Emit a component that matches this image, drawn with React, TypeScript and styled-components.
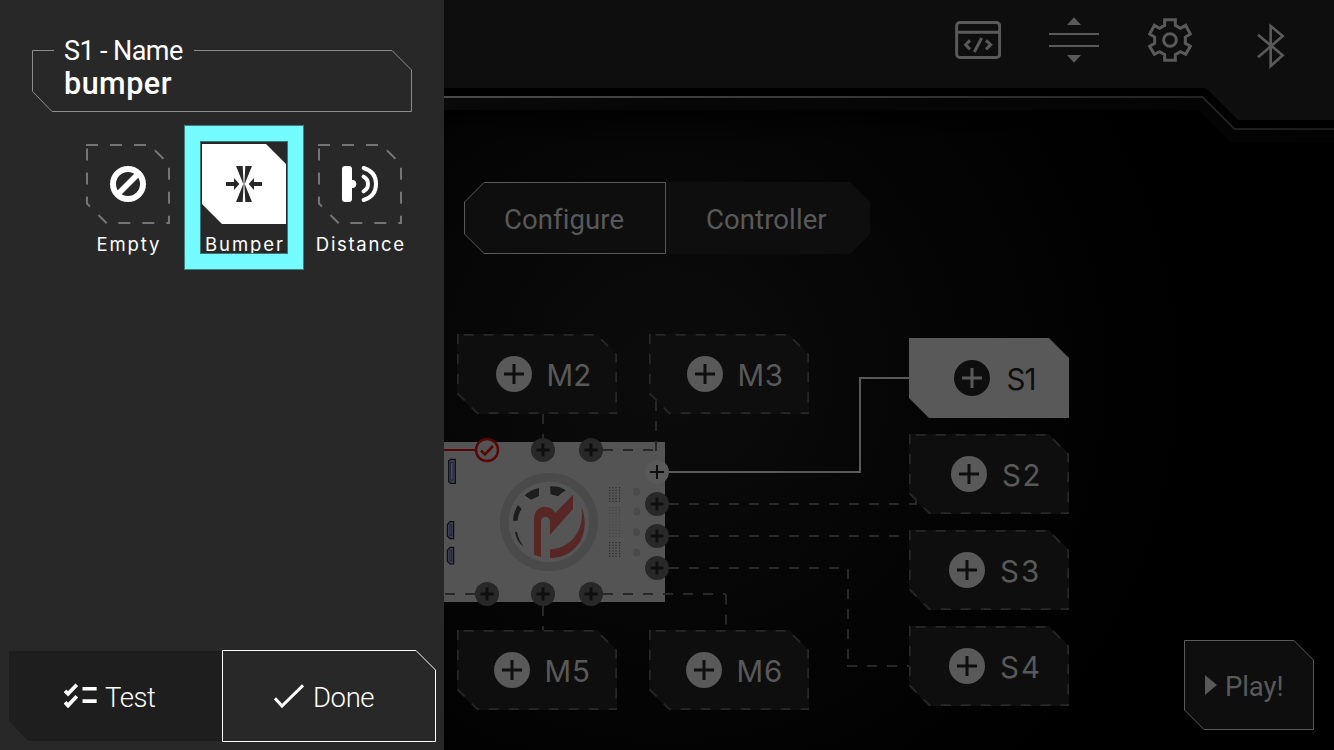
import React from "react";
import styled, { createGlobalStyle } from "styled-components";

const GlobalStyle = createGlobalStyle`
  * { box-sizing: border-box; }
  body { margin: 0; background: #000; font-family: Roboto, "Liberation Sans", sans-serif; }
  svg { display: block; flex: none; }
`;

const DIM = "#595959";
const PANEL = "#0e0e0e";
const LINE = "#282828";

const Stage = styled.div`
  position: relative;
  width: 1334px;
  height: 750px;
  overflow: hidden;
  display: flex;
  flex-direction: column;
  background: radial-gradient(circle at 667px 375px, #0c0c0c 0, #060606 230px, #000 520px);
`;

const Header = styled.header`
  position: relative;
  height: 142px;
  flex: none;
`;

const HeaderShape = styled.svg`
  position: absolute;
  inset: 0;
`;

const HeaderIcons = styled.nav`
  position: relative;
  display: flex;
  align-items: flex-start;
  justify-content: flex-end;
  padding: 17px 49px 0 0;
`;

const IconSlot = styled.span<{ $top: number; $gap: number }>`
  margin-top: ${(p) => p.$top}px;
  margin-right: ${(p) => p.$gap}px;
`;

const Tabs = styled.div`
  display: flex;
  margin: 40px 0 0 464px;
`;

const Tab = styled.div<{ $width: number; $indent: number; $spacing: number }>`
  position: relative;
  width: ${(p) => p.$width}px;
  height: 72px;
  padding-left: ${(p) => p.$indent}px;
  display: flex;
  align-items: center;
  font-size: 27.5px;
  line-height: 1;
  font-weight: 450;
  padding-top: 3px;
  letter-spacing: ${(p) => p.$spacing}px;
  color: ${DIM};
`;

const Backdrop = styled.svg`
  position: absolute;
  inset: 0;
  z-index: 0;
`;

const Label = styled.span`
  position: relative;
  white-space: nowrap;
`;

const PlayButton = styled.div`
  position: relative;
  align-self: flex-end;
  margin: auto 20px 20px 0;
  width: 130px;
  height: 90px;
  display: flex;
  align-items: center;
  gap: 8px;
  padding: 3px 0 0 21px;
  color: ${DIM};
  font-size: 27.5px;
  line-height: 1;
  letter-spacing: -0.1px;
`;

const PlayIcon = styled.svg`
  position: relative;
  top: -2px;
`;

const Diagram = styled.div`
  position: absolute;
  inset: 0;
  pointer-events: none;
`;

const Wires = styled.svg`
  position: absolute;
  inset: 0;
`;

const NodeBox = styled.div<{ $x: number; $y: number; $indent: number; $on?: boolean }>`
  position: absolute;
  left: ${(p) => p.$x}px;
  top: ${(p) => p.$y}px;
  width: 160px;
  height: 80px;
  padding-left: ${(p) => p.$indent}px;
  display: flex;
  align-items: center;
  clip-path: polygon(0 0, 140px 0, 160px 20px, 160px 80px, 20px 80px, 0 60px);
  background: ${(p) => (p.$on ? DIM : PANEL)};
  color: ${(p) => (p.$on ? PANEL : DIM)};
`;

const PlusCircle = styled.svg`
  position: relative;
`;

const NodeLabel = styled.span<{ $gap: number; $spacing: number }>`
  position: relative;
  top: 2px;
  margin-left: ${(p) => p.$gap}px;
  font-family: Inter, "Liberation Sans", sans-serif;
  font-size: 29.5px;
  line-height: 1;
  font-weight: 400;
  letter-spacing: ${(p) => p.$spacing}px;
`;

const Drawer = styled.aside`
  position: absolute;
  left: 0;
  top: 0;
  width: 444px;
  height: 750px;
  background: #282828;
  color: #fff;
  display: flex;
  flex-direction: column;
  padding: 39px 8px 8px 9px;
`;

const NameField = styled.div`
  position: relative;
  width: 380px;
  height: 73px;
  margin-left: 23px;
  padding-left: 32px;
  display: flex;
  flex-direction: column;
`;

const FieldTitle = styled.span`
  position: relative;
  font-size: 27px;
  line-height: 24px;
  letter-spacing: -0.6px;
`;

const FieldValue = styled.span`
  position: relative;
  margin-top: 6px;
  font-size: 30.5px;
  line-height: 30px;
  font-weight: 500;
  letter-spacing: 0.5px;
`;

const Picker = styled.div`
  display: flex;
  gap: 16px;
  margin: 32px 0 0 69px;
`;

const Choice = styled.div`
  position: relative;
  width: 100px;
  display: flex;
  flex-direction: column;
  align-items: center;
`;

const Tile = styled.div<{ $on?: boolean }>`
  position: relative;
  width: 84px;
  height: 80px;
  display: flex;
  align-items: center;
  justify-content: center;
  background: ${(p) => (p.$on ? "#fff" : "transparent")};
  clip-path: polygon(0 0, 64px 0, 84px 20px, 84px 80px, 20px 80px, 0 60px);
`;

const TileIcon = styled.svg`
  position: relative;
`;

const Caption = styled.span<{ $spacing: number }>`
  margin-top: 10px;
  font-family: Inter, "Liberation Sans", sans-serif;
  font-size: 18.5px;
  line-height: 21px;
  letter-spacing: ${(p) => p.$spacing}px;
  margin-right: -${(p) => p.$spacing}px;
  white-space: nowrap;
`;

const Highlight = styled.div`
  position: absolute;
  left: -9px;
  top: -18px;
  width: 118px;
  height: 143px;
  border: 15px solid #74fbfd;
  outline: 1px solid rgba(116, 251, 253, 0.4);
  box-shadow: inset 0 0 0 1px #3a7677;
`;

const Actions = styled.div`
  display: flex;
  margin-top: auto;
`;

const Action = styled.div<{ $width: number; $indent: number; $gap: number; $spacing: number }>`
  position: relative;
  width: ${(p) => p.$width}px;
  height: 92px;
  display: flex;
  align-items: center;
  gap: ${(p) => p.$gap}px;
  padding: 3px 0 0 ${(p) => p.$indent}px;
  font-size: 27.5px;
  line-height: 1;
  font-weight: 350;
  letter-spacing: ${(p) => p.$spacing}px;
`;

const ActionIcon = styled.svg`
  position: relative;
  top: -2px;
`;

type NodeProps = { x: number; y: number; indent: number; gap: number; name: string; spacing: number; on?: boolean };

const nodes: NodeProps[] = [
  { x: 457, y: 334, indent: 39, gap: 14.5, spacing: 0, name: "M2" },
  { x: 649, y: 334, indent: 38, gap: 14.5, spacing: 0.5, name: "M3" },
  { x: 457, y: 630, indent: 37, gap: 14.5, spacing: 0.8, name: "M5" },
  { x: 649, y: 630, indent: 37, gap: 14.5, spacing: 0.8, name: "M6" },
  { x: 909, y: 338, indent: 45, gap: 16.5, spacing: -1, name: "S1", on: true },
  { x: 909, y: 434, indent: 42, gap: 15, spacing: 1.5, name: "S2" },
  { x: 909, y: 530, indent: 40, gap: 15, spacing: 2, name: "S3" },
  { x: 909, y: 626, indent: 40, gap: 15, spacing: 2, name: "S4" },
];

function PortNode({ x, y, indent, gap, spacing, name, on }: NodeProps) {
  return (
    <NodeBox $x={x} $y={y} $indent={indent} $on={on}>
      {!on && (
        <Backdrop width="160" height="80">
          <path d="M0 0V60L20 80H160V20L140 0Z" fill="none" stroke={LINE} strokeWidth="3.4" strokeDasharray="10 10" />
        </Backdrop>
      )}
      <PlusCircle width="36" height="36">
        <circle cx="18" cy="18" r="18" fill={on ? PANEL : DIM} />
        <path d="M8 18H28M18 8V28" stroke={on ? DIM : PANEL} strokeWidth="3" />
      </PlusCircle>
      <NodeLabel $gap={gap} $spacing={spacing}>{name}</NodeLabel>
    </NodeBox>
  );
}

const ports = [
  [543, 450], [591, 450], [657, 504], [657, 536], [657, 568], [487, 594], [543, 594], [591, 594],
];

const dotRows = [
  ...[173, 181, 189, 198, 206, 214].map((y) => ({ y, c: "#1a1a1a" })),
  ...[233, 241, 250].map((y) => ({ y, c: "#3a3c44" })),
  ...[258, 267, 275, 284, 292].map((y) => ({ y, c: "#464646" })),
  ...[301, 310, 319].map((y) => ({ y, c: "#3a3c44" })),
  ...[338, 346, 354, 363, 371, 379].map((y) => ({ y, c: "#1a1a1a" })),
];

function Board() {
  return (
    <g>
      <rect x="440" y="442" width="225" height="160" fill="#545454" />
      <g transform="translate(444 430) scale(.33333)">
        <circle cx="315" cy="276" r="134" fill="#555" stroke="#4a4a4a" strokeWidth="26" />
        <g fill="#1d1d1d">
          <path d="M318 169L344 170L366 181Q352 188 343 199L320 193Z" />
          <path d="M242 196Q262 178 285 174V198L261 209Z" />
          <path d="M222 225L233 237Q222 252 221 272H207Q208 246 222 225Z" />
          <path d="M213 306H219Q224 330 239 350Q218 336 213 306Z" />
        </g>
        <g fill="#572625">
          <path d="M270 374V268Q271 231 304 230Q324 231 334 249L387 194V237L318 314V276Q318 261 304 260Q291 261 291 276V381Z" />
          <path d="M318 358C378 356 424 302 412 230C427 262 426 312 403 343C382 372 350 384 318 384Z" />
        </g>
        {dotRows.map((r) =>
          [497, 507, 516, 527].map((x) => <rect key={`${x}-${r.y}`} x={x - 1.5} y={r.y - 1.5} width="3" height="3" fill={r.c} />)
        )}
        {[185, 245, 306, 367].map((y) => <path key={y} d={`M568 ${y - 8}Q580 ${y - 18} 588 ${y - 4}V${y + 6}Q580 ${y + 18} 568 ${y + 8}Z`} fill="#4a4a4a" />)}
        <g fill="#3c4052" stroke="#0d0d12" strokeWidth="3.5">
          <path d="M14 92L20 88H34V160H20L14 155Z" />
          <path d="M20 98H27V150H20Z" fill="#555a68" stroke="#22263c" />
          <path d="M10 284L18 275H29V326H18L10 318Z" />
          <path d="M18 284H23V316H18Z" fill="#555a68" stroke="#22263c" />
          <path d="M10 361L18 352H29V402H18L10 394Z" />
          <path d="M18 361H23V393H18Z" fill="#555a68" stroke="#22263c" />
        </g>
      </g>
    </g>
  );
}

function Connections() {
  return (
    <Wires width="1334" height="750" fill="none">
      <Board />
      <g stroke={LINE} strokeWidth="2" strokeDasharray="10 10">
        <path d="M669 504H916V497" />
        <path d="M669 536H909" />
        <path d="M669 568H848V666" />
        <path d="M847 666H909" />
        <path d="M543 414V438" />
        <path d="M603 450H656" />
        <path d="M656 451V400" />
        <path d="M543 606V630" />
        <path d="M603 594H726" />
        <path d="M726 594.500V630" />
        <path d="M475 594H444" />
      </g>
      <path d="M669 472H860V378H909" stroke={DIM} strokeWidth="2" />
      <path d="M444 450H475" stroke="#590607" strokeWidth="2" />
      <circle cx="487" cy="450" r="11" fill="#545454" stroke="#590607" strokeWidth="2.4" />
      <path d="M481 450.500L485 454.500L493 446" stroke="#590607" strokeWidth="2.600" />
      {ports.map(([x, y]) => (
        <g key={`${x}-${y}`}>
          <circle cx={x} cy={y} r="12" fill="#282828" />
          <path d={`M${x - 6.5} ${y}h13M${x} ${y - 6.5}v13`} stroke="#0e0e0e" strokeWidth="3" />
        </g>
      ))}
      <circle cx="657" cy="472" r="12" fill={DIM} />
      <path d="M650 472h14M657 465v14" stroke="#0e0e0e" strokeWidth="2" />
    </Wires>
  );
}

function TopBar() {
  return (
    <Header>
      <HeaderShape width="1334" height="142">
        <defs>
          <linearGradient id="rail" x1="444" x2="1334" y1="0" y2="0" gradientUnits="userSpaceOnUse">
            <stop offset="0" stopColor="#4a4a4a" />
            <stop offset="0.5" stopColor="#343434" />
            <stop offset="1" stopColor="#1a1a1a" />
          </linearGradient>
          <linearGradient id="band" x1="444" x2="1334" y1="0" y2="0" gradientUnits="userSpaceOnUse">
            <stop offset="0" stopColor="#090909" />
            <stop offset="1" stopColor="#030303" />
          </linearGradient>
          <linearGradient id="shade" x1="0" x2="0" y1="100" y2="142" gradientUnits="userSpaceOnUse">
            <stop offset="0" stopColor="#000" />
            <stop offset="1" stopColor="#000" stopOpacity="0" />
          </linearGradient>
        </defs>
        <path d="M0 0H1334V142H0Z" fill="url(#shade)" />
        <path d="M0 97H1202L1234 129H1334V142H1231L1199 110H0Z" fill="url(#band)" />
        <path d="M0 97H1202.500L1234.500 129H1334" fill="none" stroke="url(#rail)" strokeWidth="2" />
        <path d="M0 0H1334V120H1238L1206 88H0Z" fill={PANEL} />
      </HeaderShape>
      <HeaderIcons>
        <IconSlot $top={4} $gap={48}>
          <svg width="46" height="38" viewBox="93 63 138 114" fill="none" stroke={DIM} strokeWidth="9">
            <rect x="98" y="67.500" width="129" height="105" rx="10" />
            <path d="M98 97H227M138 121L125 134L138 148M186 121L200 134L186 148M173 114L151 156" />
          </svg>
        </IconSlot>
        <IconSlot $top={0} $gap={49}>
          <svg width="50" height="46" viewBox="375 51 150 138" fill={DIM}>
            <path d="M429 75L450 52L471 75ZM429 165L450 188L471 165ZM375 99H525V105H375ZM375 135H525V141H375Z" />
          </svg>
        </IconSlot>
        <IconSlot $top={1} $gap={65}>
          <svg width="44" height="44" viewBox="672 54 132 132" fill="none" stroke={DIM} strokeWidth="9">
            <path d="M722 59H754V76L769 85L785 76L799 102L784 111V130L799 139L785 163L769 155L754 164V181H722V164L707 155L691 163L677 139L692 130V111L677 102L691 76L707 85L722 76Z" />
            <circle cx="738" cy="120" r="19" />
          </svg>
        </IconSlot>
        <IconSlot $top={6} $gap={0}>
          <svg width="28" height="46" viewBox="999 69 84 138" fill="none" stroke={DIM} strokeWidth="8">
            <path d="M1002 104L1076 166L1040 198V78L1076 108L1002 172" />
          </svg>
        </IconSlot>
      </HeaderIcons>
    </Header>
  );
}

export default function App() {
  return (
    <>
      <GlobalStyle />
      <Stage>
        <TopBar />
        <Tabs>
          <Tab $width={202} $indent={40} $spacing={0.1}>
            <Backdrop width="202" height="72">
              <path d="M20 .5H201.500V71.500H20L.5 52V20Z" fill={PANEL} stroke={DIM} />
            </Backdrop>
            <Label>Configure</Label>
          </Tab>
          <Tab $width={204} $indent={40} $spacing={0.1}>
            <Backdrop width="204" height="72">
              <path d="M0 0H184L204 20V52L184 72H0Z" fill={PANEL} />
            </Backdrop>
            <Label>Controller</Label>
          </Tab>
        </Tabs>
        <PlayButton>
          <Backdrop width="130" height="90">
            <path d="M.5 .5H110L129.500 20V89.500H20L.5 70Z" fill={PANEL} stroke={DIM} />
          </Backdrop>
          <PlayIcon width="12" height="20">
            <path d="M0 0L12 10L0 20Z" fill={DIM} />
          </PlayIcon>
          <Label>Play!</Label>
        </PlayButton>
        <Diagram>
          {nodes.map((n) => <PortNode key={n.name} {...n} />)}
          <Connections />
        </Diagram>
        <Drawer>
          <NameField>
            <Backdrop width="380" height="73" fill="none">
              <path d="M22 11.500H.5V52.500L20 72.500H379.500V31L360 11.500H162" stroke="#8c8c8c" />
            </Backdrop>
            <FieldTitle>S1 - Name</FieldTitle>
            <FieldValue>bumper</FieldValue>
          </NameField>
          <Picker>
            <Choice>
              <Tile>
                <Backdrop width="84" height="80" fill="none">
                  <path d="M0 0H64L84 20V80H20L0 60Z" stroke="#757575" strokeWidth="4" strokeDasharray="12 12" />
                </Backdrop>
                <TileIcon width="36" height="36" fill="none" stroke="#fff">
                  <circle cx="18" cy="18" r="15" strokeWidth="6" />
                  <path d="M8.500 27.500L27.500 8.500" strokeWidth="5.600" />
                </TileIcon>
              </Tile>
              <Caption $spacing={1.9}>Empty</Caption>
            </Choice>
            <Choice>
              <Tile $on>
                <TileIcon width="36" height="36" viewBox="678 438 108 108" fill="#282828">
                  <path d="M708 438H728L731 492L729 490ZM736 438H756L735 490L733 492ZM708 546H728L731 492L729 494ZM736 546H756L735 494L733 492Z" />
                  <path d="M678 486H702V474L718 492L702 510V498H678ZM786 486H762V474L746 492L762 510V498H786Z" />
                </TileIcon>
              </Tile>
              <Caption $spacing={1.9}>Bumper</Caption>
              <Highlight />
            </Choice>
            <Choice>
              <Tile>
                <Backdrop width="84" height="80" fill="none">
                  <path d="M0 0H64L84 20V80H20L0 60Z" stroke="#757575" strokeWidth="4" strokeDasharray="12 12" />
                </Backdrop>
                <TileIcon width="36" height="36" viewBox="1026 438 108 108" fill="none" stroke="#fff" strokeWidth="12" strokeLinecap="round">
                  <rect x="1026" y="438" width="30" height="108" rx="9" fill="#fff" stroke="none" />
                  <circle cx="1057" cy="492" r="12" fill="#fff" stroke="none" />
                  <path d="M1091 470Q1104 477 1104 492Q1104 507 1091 514M1091 444Q1128 455 1128 492Q1128 529 1091 540" />
                </TileIcon>
              </Tile>
              <Caption $spacing={1.7}>Distance</Caption>
            </Choice>
          </Picker>
          <Actions>
            <Action $width={213} $indent={55} $gap={8} $spacing={-0.4}>
              <Backdrop width="213" height="92">
                <path d="M0 1H213V91H19L0 71Z" fill="#1e1e1e" />
              </Backdrop>
              <ActionIcon width="33" height="25" viewBox="192 162 98 74" fill="none" stroke="#fff" strokeWidth="11">
                <path d="M195 185L204 194L230 167M195 219L204 229L230 201M247 179H289M247 216H289" />
              </ActionIcon>
              <Label>Test</Label>
            </Action>
            <Action $width={214} $indent={52} $gap={9} $spacing={-0.4}>
              <Backdrop width="214" height="92">
                <path d="M.5 .5H194L213.500 20V91.500H.5Z" fill="#282828" stroke="#fff" />
              </Backdrop>
              <ActionIcon width="30" height="24" viewBox="822 164 90 72" fill="none" stroke="#fff" strokeWidth="9">
                <path d="M825 207L846 230L909 168" />
              </ActionIcon>
              <Label>Done</Label>
            </Action>
          </Actions>
        </Drawer>
      </Stage>
    </>
  );
}
